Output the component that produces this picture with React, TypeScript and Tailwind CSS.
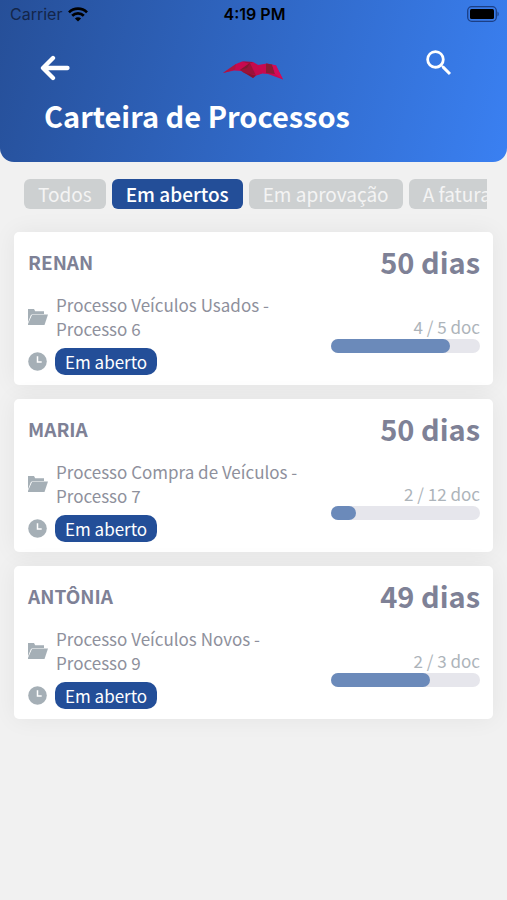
import { MdSearch } from 'react-icons/md';

interface Processo {
  id: string;
  cliente: string;
  titulo: string;
  numero: string;
  dias: number;
  docs: number;
  totalDocs: number;
}

const filtros = ['Todos', 'Em abertos', 'Em aprovação', 'A faturar'];

const processos: Processo[] = [
  {
    id: '6',
    cliente: 'RENAN',
    titulo: 'Processo Veículos Usados -',
    numero: 'Processo 6',
    dias: 50,
    docs: 4,
    totalDocs: 5,
  },
  {
    id: '7',
    cliente: 'MARIA',
    titulo: 'Processo Compra de Veículos -',
    numero: 'Processo 7',
    dias: 50,
    docs: 2,
    totalDocs: 12,
  },
  {
    id: '9',
    cliente: 'ANTÔNIA',
    titulo: 'Processo Veículos Novos -',
    numero: 'Processo 9',
    dias: 49,
    docs: 2,
    totalDocs: 3,
  },
];

function StatusBar() {
  return (
    <div className="grid grid-cols-3 items-center h-7 pl-[10px] pr-2 font-['Inter',sans-serif] text-[16px] leading-7">
      <div className="flex items-center gap-[6px]">
        <span className="text-[#14264a]">Carrier</span>
        <svg width="20" height="15" viewBox="0 0 20 15" fill="none" stroke="#000" strokeWidth="2.7">
          <path d="M1 5.4a12.8 12.8 0 0 1 18 0" />
          <path d="M4.2 8.8a8.2 8.2 0 0 1 11.6 0" />
          <path d="M10 14.6 6.9 11.5a4.4 4.4 0 0 1 6.2 0z" fill="#000" stroke="none" />
        </svg>
      </div>
      <span className="text-center font-semibold whitespace-nowrap text-black">4:19 PM</span>
      <svg className="justify-self-end" width="32" height="16" viewBox="0 0 32 16">
        <rect x="0.7" y="0.7" width="28.6" height="14.6" rx="4" fill="none" stroke="#1c3f85" strokeWidth="1.3" />
        <rect x="3" y="3" width="24" height="10" rx="1.5" fill="#000" />
        <path d="M30.5 5.5c1.6.8 1.6 4.2 0 5z" fill="#1c3f85" />
      </svg>
    </div>
  );
}

function Logo() {
  return (
    <svg width="62" height="20" viewBox="0 0 62 20" aria-hidden="true">
      <path d="M1 13 14 4 20 1.5 31 2 36 5 45 3.5 54 5.5 61 19.5 46 14 40 13.5 34 15.5 31 18 20 11 12 10.5z" fill="#c8094f" />
      <path d="M1 13 14 4 13 9.5z" fill="#ad1740" />
      <path d="M20 1.5 31 2 28 4z" fill="#a30f3c" />
      <path d="M28 3 18 10 22 13 34 15 33 7z" fill="#9a1338" />
      <path d="M28 3 25 8 18 10z" fill="#7e1a30" />
      <path d="M22 12.5 34 15.5 31 18z" fill="#84152f" />
      <path d="M28 3 36 5 40 13.5 34 15.5z" fill="#c40b4c" />
      <path d="M44 3.5 50 4.5 53 14 44 13z" fill="#8a1d33" />
      <path d="M50 4.5 54 5.5 61 19.5 53 14z" fill="#d40b58" />
    </svg>
  );
}

function FolderIcon() {
  return (
    <svg width="20" height="18" viewBox="0 0 20 18" fill="#a5afb6">
      <path d="M0 1h6l1.2 2.2H16V6H4.4L2.8 7.200 0 14.5z" />
      <path d="M4.2 6.5H20L16.5 17H0v-1.2z" />
    </svg>
  );
}

function ClockIcon() {
  return (
    <svg width="20" height="20" viewBox="0 0 20 20" fill="none">
      <circle cx="9.5" cy="9.5" r="9.3" fill="#a5afb6" />
      <path d="M9.5 4.3v5.7h4.2" stroke="#fff" strokeWidth="1.5" />
    </svg>
  );
}

function Header() {
  return (
    <header className="rounded-b-[14px] pb-[31px] bg-[linear-gradient(105deg,#264f98_0%,#3a80f2_100%)]">
      <StatusBar />
      <div className="grid grid-cols-3 items-center h-[75px] px-10">
        <button type="button" aria-label="Voltar" className="justify-self-start pt-1">
          <svg width="30" height="26" viewBox="0 0 30 26" fill="none" stroke="#fff" strokeWidth="4.3" strokeLinecap="round" strokeLinejoin="round">
            <path d="M13 3 3 13l10 10M4 13h23.5" />
          </svg>
        </button>
        <div className="justify-self-center pt-2">
          <Logo />
        </div>
        <button type="button" aria-label="Buscar" className="justify-self-end pr-[11px] pb-[6px]">
          <MdSearch size={34} color="#fff" />
        </button>
      </div>
      <h1 className="pl-11 -mt-1 text-[29px] leading-8 font-bold text-white">Carteira de Processos</h1>
    </header>
  );
}

function Card({ processo }: { processo: Processo }) {
  const { cliente, titulo, numero, dias, docs, totalDocs } = processo;
  return (
    <li className="rounded-[5px] bg-white pl-[14px] pr-[13px] pt-3 pb-[10px] shadow-[0_0_24px_rgba(0,0,0,0.06)]">
      <div className="flex items-center justify-between h-9 text-[#7e8196] font-bold">
        <h2 className="text-[19px]">{cliente}</h2>
        <span className="text-[29px]">{dias} dias</span>
      </div>
      <div className="flex items-end justify-between mt-[13px]">
        <div>
          <div className="flex items-center gap-2">
            <FolderIcon />
            <p className="text-[17px] leading-6 text-[#8e909c]">
              {titulo}
              <br />
              {numero}
            </p>
          </div>
          <div className="flex items-center mt-[7px] gap-[7px]">
            <ClockIcon />
            <span className="rounded-[10px] bg-[#234e98] px-[10px] text-[17px] leading-[27px] text-white">Em aberto</span>
          </div>
        </div>
        <div className="w-[33%] mb-[22px]">
          <p className="text-right text-[17px] leading-6 text-[#adb4ba]">
            {docs} / {totalDocs} doc
          </p>
          <div className="h-[14px] rounded-full bg-[#e6e6ec]">
            <div className="h-full rounded-full bg-[#6b8aba]" style={{ width: `${(docs / totalDocs) * 100}%` }} />
          </div>
        </div>
      </div>
    </li>
  );
}

export default function App() {
  return (
    <div className="min-h-screen bg-[#f1f1f1] font-['Noto_Sans_CJK_JP',sans-serif]">
      <Header />
      <nav className="flex gap-[6px] mt-[17px] ml-6 mr-5 overflow-x-auto [scrollbar-width:none]">
        {filtros.map((filtro) => (
          <button
            key={filtro}
            type="button"
            className={`shrink-0 h-[30px] rounded-[6px] text-[19px] leading-[30px] whitespace-nowrap ${
              filtro === 'Em abertos' ? 'px-[14px] font-medium bg-[#234e98] text-white' : 'px-[14px] bg-[#cdd0d1] text-[#f4f4f4]'
            }`}
          >
            {filtro}
          </button>
        ))}
      </nav>
      <ul className="flex flex-col gap-[14px] mt-[23px] mx-[14px]">
        {processos.map((processo) => (
          <Card key={processo.id} processo={processo} />
        ))}
      </ul>
    </div>
  );
}
